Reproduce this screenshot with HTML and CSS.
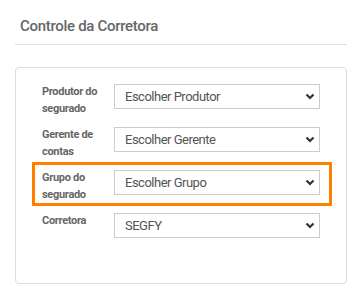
FILE: index.html
```html
<!DOCTYPE html>
<html lang="pt-BR">
<head>
  <meta charset="UTF-8" />
  <title>Controle da Corretora</title>
  <link rel="stylesheet" href="styles.css">
</head>
<body>

  <div class="section-header">
    <h2>Controle da Corretora</h2>
  </div>

  <div class="panel">
    <div class="row">
      <label for="produtor">Produtor do segurado</label>
      <div class="select-wrap">
        <select id="produtor">
          <option>Escolher Produtor</option>
        </select>
        <svg class="chevron" width="10" height="7" viewBox="0 0 10 7"><path d="M1.5 1.5 L5 5 L8.5 1.5" fill="none" stroke="#333" stroke-width="2.2"/></svg>
      </div>
    </div>

    <div class="row">
      <label for="gerente">Gerente de contas</label>
      <div class="select-wrap">
        <select id="gerente">
          <option>Escolher Gerente</option>
        </select>
        <svg class="chevron" width="10" height="7" viewBox="0 0 10 7"><path d="M1.5 1.5 L5 5 L8.5 1.5" fill="none" stroke="#333" stroke-width="2.2"/></svg>
      </div>
    </div>

    <div class="row highlight">
      <label for="grupo">Grupo do segurado</label>
      <div class="select-wrap">
        <select id="grupo">
          <option>Escolher Grupo</option>
        </select>
        <svg class="chevron" width="10" height="7" viewBox="0 0 10 7"><path d="M1.5 1.5 L5 5 L8.5 1.5" fill="none" stroke="#333" stroke-width="2.2"/></svg>
      </div>
    </div>

    <div class="row">
      <label for="corretora">Corretora</label>
      <div class="select-wrap">
        <select id="corretora">
          <option>SEGFY</option>
        </select>
        <svg class="chevron" width="10" height="7" viewBox="0 0 10 7"><path d="M1.5 1.5 L5 5 L8.5 1.5" fill="none" stroke="#333" stroke-width="2.2"/></svg>
      </div>
    </div>
  </div>

</body>
</html>
```

FILE: styles.css
```css
body {
  font-family: Roboto, "Liberation Sans", sans-serif;
  background-color: #fff;
  color: #555;
  margin: 0;
}
.section-header {
  margin: 0 13px 0 15px;
  padding: 16px 5px 8px;
  border-bottom: 1px solid #e0e0e0;
}
.section-header h2 {
  margin: 0;
  font-size: 15px;
  line-height: 20px;
  font-weight: 500;
  letter-spacing: -0.3px;
  color: #666;
}
.panel {
  margin: 22px 13px 0 15px;
  padding: 11px 17px 45px 19px;
  border: 1px solid #ddd;
  border-radius: 4px;
  display: flex;
  flex-direction: column;
  gap: 5px;
}
.row {
  display: flex;
  align-items: flex-start;
  padding: 4px 9px 0 7px;
}
.row.highlight {
  outline: 3px solid #ff8000;
}
.row label {
  width: 72px;
  flex-shrink: 0;
  font-size: 11px;
  font-weight: 700;
  line-height: 17px;
  letter-spacing: -0.3px;
  color: #666;
  padding-right: 8px;
  box-sizing: border-box;
}
.select-wrap {
  position: relative;
  flex: 1;
  margin-top: 1px;
}
select {
  appearance: none;
  -webkit-appearance: none;
  width: 100%;
  height: 25px;
  padding: 0 24px 0 10px;
  border: 1px solid #ccc;
  border-radius: 0;
  background-color: #fff;
  font-family: Roboto, "Liberation Sans", sans-serif;
  font-size: 13px;
  letter-spacing: -0.5px;
  color: #555;
}
.chevron {
  position: absolute;
  right: 5px;
  top: 9px;
  pointer-events: none;
}
```
